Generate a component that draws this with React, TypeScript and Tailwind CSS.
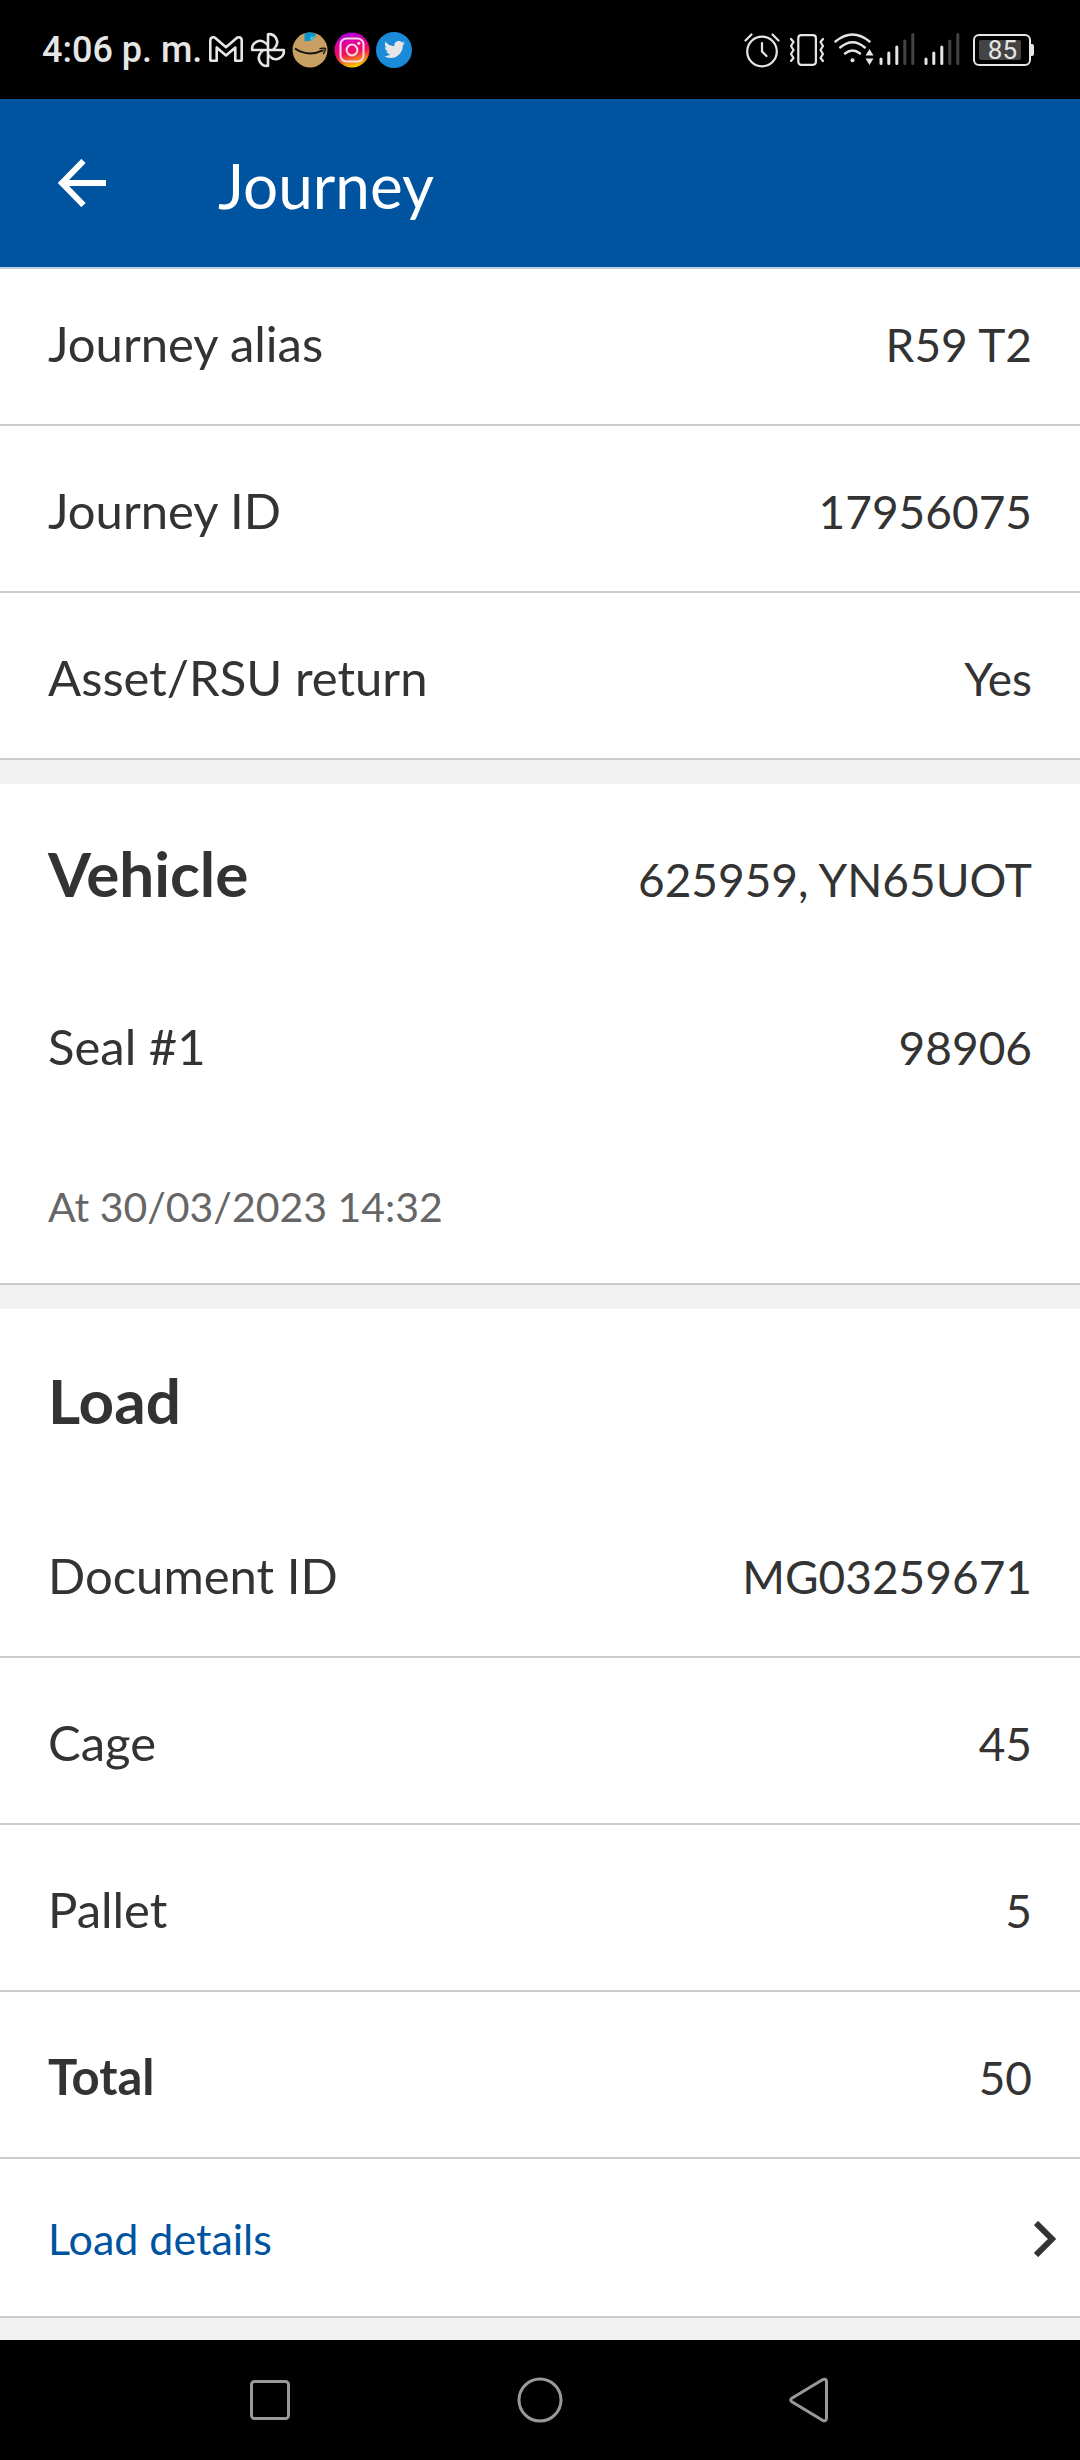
import React from 'react';
import { FaTwitter } from 'react-icons/fa';

const GmailIcon = () => (
  <svg className="h-9 w-9" viewBox="0 0 36 36" fill="none" stroke="#e6e6e6" strokeWidth="2.6" strokeLinejoin="round">
    <path d="M2.3 28V8.5Q2.3 5.3 5.3 5.3Q6.6 5.3 7.6 6.2L18 15.2L28.4 6.2Q29.4 5.3 30.7 5.3Q33.7 5.3 33.7 8.5V28Q33.7 28.7 33 28.7H27.3V15.5L18 23.4L8.7 15.5V28.7H3Q2.3 28.7 2.3 28Z" />
  </svg>
);

const PinwheelIcon = () => (
  <svg className="h-9 w-9" viewBox="0 0 36 36" fill="none" stroke="#e6e6e6" strokeWidth="2.6" strokeLinejoin="round">
    <path d="M18 18V2.2A8 8 0 0 1 25 15.5" />
    <path d="M18 18H33.8A8 8 0 0 1 20.5 25" />
    <path d="M18 18V33.8A8 8 0 0 1 11 20.5" />
    <path d="M18 18H2.2A8 8 0 0 1 15.5 11" />
    <path d="M25 15.5L23 18M20.5 25L18 23M11 20.5L13 18M15.5 11L18 13" />
  </svg>
);

const AmazonIcon = () => (
  <svg className="h-9 w-9" viewBox="0 0 36 36">
    <circle cx="18" cy="18" r="17.5" fill="#c9a063" />
    <path d="M12.5 1.4Q18 -0.4 23.5 1.4V4.5L18.5 9H12.5Z" fill="#0c95c9" />
    <path d="M18.5 9V4.5H23.5Z" fill="#35c6ea" />
    <path d="M3 16.5Q16 25.5 31.5 18.2" fill="none" stroke="#111" strokeWidth="2" />
    <path d="M27.5 16.7Q31 15.7 33.4 16.4Q33.4 19 31.3 22" fill="none" stroke="#111" strokeWidth="1.4" />
  </svg>
);

const InstagramIcon = () => (
  <svg className="h-9 w-9" viewBox="0 0 36 36">
    <defs>
      <linearGradient id="insta" x1="0.25" y1="0" x2="0.5" y2="1">
        <stop offset="0" stopColor="#a000e8" />
        <stop offset="0.3" stopColor="#e000a0" />
        <stop offset="0.6" stopColor="#f0105c" />
        <stop offset="0.8" stopColor="#f57020" />
        <stop offset="1" stopColor="#f8d000" />
      </linearGradient>
    </defs>
    <circle cx="18" cy="18" r="17.5" fill="url(#insta)" />
    <g fill="none" stroke="#f1dbe6" strokeWidth="2">
      <rect x="6.5" y="6.5" width="23" height="23" rx="6" />
      <circle cx="18" cy="18" r="5.4" />
    </g>
    <circle cx="24.8" cy="11.3" r="1.6" fill="#f1dbe6" />
  </svg>
);

const AlarmIcon = () => (
  <svg className="h-9 w-9" viewBox="0 0 36 36" fill="none" stroke="#e6e6e6" strokeWidth="2.2" strokeLinecap="round">
    <circle cx="18" cy="19.5" r="14.8" />
    <path d="M18 11V19.5L22.5 24M1.5 8.5L7.5 2.5M34.5 8.5L28.5 2.5" />
  </svg>
);

const VibrateIcon = () => (
  <svg className="h-9 w-9" viewBox="0 0 36 36" fill="none" stroke="#e6e6e6" strokeWidth="2.2" strokeLinecap="round" strokeLinejoin="round">
    <rect x="9.3" y="3.2" width="17.6" height="29.6" rx="3" />
    <path d="M2 7L4.5 10L2 14L4.5 18L2 22L4.5 26L2 29M34 7L31.5 10L34 14L31.5 18L34 22L31.5 26L34 29" />
  </svg>
);

const WifiIcon = () => (
  <svg className="h-9 w-10" viewBox="0 0 40 36" fill="none" stroke="#e6e6e6" strokeWidth="2.4" strokeLinecap="round">
    <path d="M1.5 9.5Q18.5 -4.5 35.5 9.5M6.2 15.5Q18.5 4.8 30.8 15.5M11 21.5Q18.5 15.5 26 21.5" />
    <circle cx="18.5" cy="28.2" r="2" fill="#e6e6e6" stroke="none" />
    <path d="M31.5 23.5L35.5 17L39.5 23.5ZM31.5 26.5L35.5 33L39.5 26.5Z" fill="#e6e6e6" stroke="none" />
  </svg>
);

const SignalIcon = () => (
  <svg className="h-9 w-9" viewBox="0 0 36 36" strokeWidth="3" strokeLinecap="round">
    <path d="M2 27V31.5M9.8 21V31.5M17.8 15V31.5" stroke="#e6e6e6" />
    <path d="M25.8 9V31.5M33.8 2.5V31.5" stroke="#444" />
  </svg>
);

const Battery = ({ level }: { level: number }) => (
  <div className="flex items-center" aria-label={`Battery ${level}%`}>
    <div className="h-8 w-[58px] rounded-[6px] border-2 border-[#e6e6e6] p-1">
      <div className="flex h-full w-[42px] items-center justify-end rounded-[2px] bg-[#444]">
        <span className="font-[Roboto,sans-serif] pr-1 text-[26px] leading-none text-[#e6e6e6]">{level}</span>
      </div>
    </div>
    <div className="h-3 w-[3px] rounded-r-[2px] bg-[#e6e6e6]" />
  </div>
);

const StatusBar = () => (
  <div className="flex h-[99px] shrink-0 items-center justify-between bg-black pr-[46px] pl-[42px]">
    <div className="flex items-center gap-[6px]">
      <span className="font-[Roboto,sans-serif] text-[36px] leading-[52px] font-medium text-[#e6e6e6]">4:06 p. m.</span>
      <GmailIcon />
      <PinwheelIcon />
      <AmazonIcon />
      <InstagramIcon />
      <div className="flex h-9 w-9 items-center justify-center rounded-full bg-[#1b8ad8] text-[21px] text-[#e6e6e6]">
        <FaTwitter />
      </div>
    </div>
    <div className="flex items-center gap-[9px]">
      <AlarmIcon />
      <VibrateIcon />
      <div className="flex items-center gap-[5px]">
        <WifiIcon />
        <SignalIcon />
      </div>
      <SignalIcon />
      <div className="pl-1">
        <Battery level={85} />
      </div>
    </div>
  </div>
);

const Header = ({ title }: { title: string }) => (
  <header className="flex h-[170px] shrink-0 items-center border-b-2 border-[#bfcfe2] bg-[#00539f] pl-[58px] text-white">
    <button aria-label="Back">
      <svg className="h-12 w-12" viewBox="0 0 48 48" fill="none" stroke="currentColor" strokeWidth="6">
        <path d="M48 24H5M25.5 2L4 24L25.5 46" />
      </svg>
    </button>
    <h1 className="pl-[112px] pt-1 text-[62px] leading-[72px]">{title}</h1>
  </header>
);

type RowProps = { label: string; value: string; strong?: boolean; plain?: boolean };

const Row: React.FC<RowProps> = ({ label, value, strong, plain }) => (
  <div
    className={`flex items-baseline justify-between px-12 pt-14 leading-[56px] ${
      plain ? '' : 'border-b-2 border-[#cccccc] pb-[51px]'
    }`}
  >
    <dt className={`text-[49px] ${strong ? 'font-bold' : ''}`}>{label}</dt>
    <dd className="text-[46px]">{value}</dd>
  </div>
);

const Divider = () => <div className="h-6 bg-[#f1f1f1]" />;

const NavBar = () => (
  <nav className="grid h-[120px] shrink-0 grid-cols-3 items-center justify-items-center bg-black px-[12.5%] text-[#999999]">
    <button aria-label="Recent apps">
      <svg className="h-12 w-12" viewBox="0 0 48 48" fill="none" stroke="currentColor" strokeWidth="3">
        <rect x="5.5" y="5.5" width="37" height="37" rx="3" />
      </svg>
    </button>
    <button aria-label="Home">
      <svg className="h-12 w-12" viewBox="0 0 48 48" fill="none" stroke="currentColor" strokeWidth="3">
        <circle cx="24" cy="24" r="21" />
      </svg>
    </button>
    <button aria-label="Back">
      <svg className="h-12 w-12" viewBox="0 0 48 48" fill="none" stroke="currentColor" strokeWidth="3" strokeLinejoin="round">
        <path d="M5.8 22.2L36.5 3.7Q40.5 2 40.5 6V42Q40.5 46 36.5 44.3L5.8 25.8Q3.6 24 5.8 22.2Z" />
      </svg>
    </button>
  </nav>
);

export default function App() {
  return (
    <div className="font-[Lato,sans-serif] flex min-h-screen flex-col bg-white text-[#333333]">
      <StatusBar />
      <Header title="Journey" />

      <main className="flex flex-1 flex-col">
        {/* list is scrolled a little under the header */}
        <dl className="-mt-[10px]">
          <Row label="Journey alias" value="R59 T2" />
          <Row label="Journey ID" value="17956075" />
          <Row label="Asset/RSU return" value="Yes" />
        </dl>
        <Divider />

        <section className="border-b-2 border-[#cccccc] pt-[53px] pb-12">
          <div className="flex items-baseline justify-between px-12 pb-[53px]">
            <h2 className="text-[62px] leading-[72px] font-bold">Vehicle</h2>
            <span className="text-[46px] leading-[56px]">625959, YN65UOT</span>
          </div>
          <dl>
            <Row label="Seal #1" value="98906" plain />
          </dl>
          <p className="px-12 pt-[103px] text-[41px] leading-[56px] text-[#666666]">At 30/03/2023 14:32</p>
        </section>
        <Divider />

        <section className="pt-[55px]">
          <h2 className="px-12 pb-[55px] text-[62px] leading-[72px] font-bold">Load</h2>
          <dl>
            <Row label="Document ID" value="MG03259671" />
            <Row label="Cage" value="45" />
            <Row label="Pallet" value="5" />
            <Row label="Total" value="50" strong />
          </dl>
          <a
            href="#load-details"
            className="flex items-center justify-between border-b-2 border-[#cccccc] pt-[52px] pr-6 pb-[49px] pl-12 text-[43px] leading-[56px] text-[#00539f]"
          >
            Load details
            <svg className="h-9 w-[22px] text-[#333333]" viewBox="0 0 22 36" fill="none" stroke="currentColor" strokeWidth="6">
              <path d="M2 2L18 18L2 34" />
            </svg>
          </a>
        </section>
        <div className="flex-1 bg-[#f1f1f1]" />
      </main>

      <NavBar />
    </div>
  );
}
